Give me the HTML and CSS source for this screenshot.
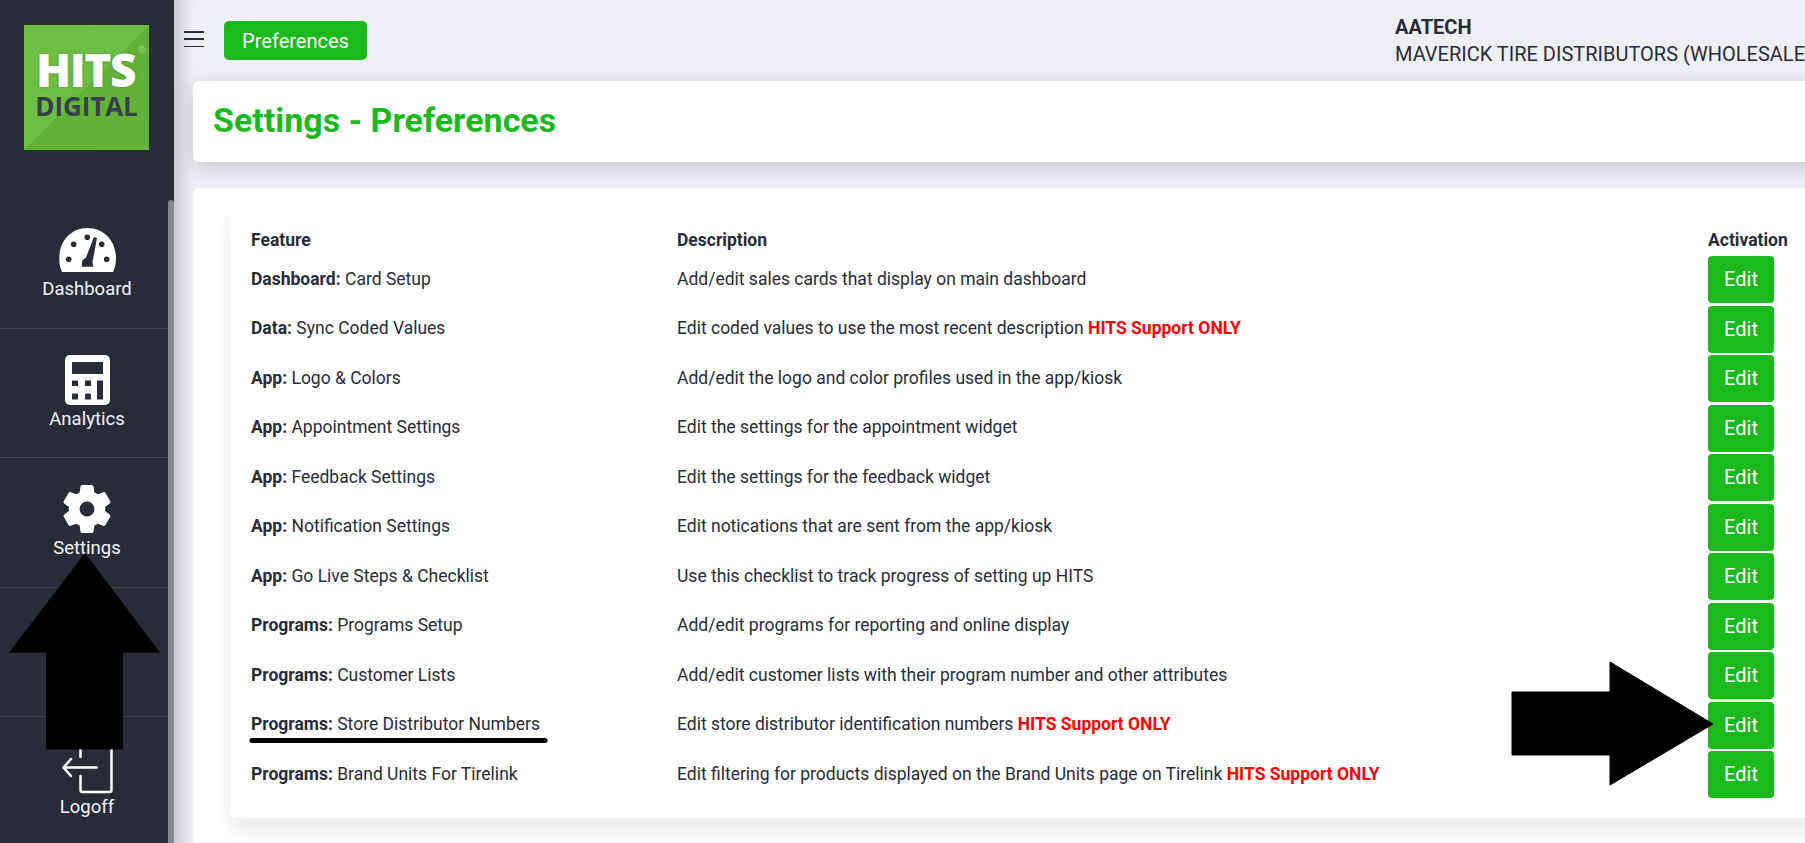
FILE: index.html
```html
<!DOCTYPE html>
<html lang="en">
<head>
<meta charset="utf-8">
<title>Settings - Preferences</title>
<link rel="stylesheet" href="styles.css">
</head>
<body>
<div class="app">
  <aside class="sidebar">
    <div class="logo-wrap">
      <div class="logo">
        <span class="logo-hits">HITS<sup class="logo-reg">®</sup></span>
        <span class="logo-digital">DIGITAL</span>
      </div>
    </div>
    <nav class="nav">
      <a class="nav-item">
        <span class="nav-icon">
          <svg width="58" height="46" viewBox="0 0 58 46"><path fill="#fff" fill-rule="evenodd" d="M4 45C2 41 1.300 36 1.300 31 1.300 14 13 1 29.500 1 46 1 58 14 58 31c0 5-1 10-3 14ZM29.300 7.500a2.800 2.800 0 1 1 0 5.600 2.800 2.800 0 0 1 0-5.600ZM15.700 14.500a2.800 2.800 0 1 1 0 5.600 2.800 2.800 0 0 1 0-5.600ZM43.700 14.500a2.800 2.800 0 1 1 0 5.600 2.800 2.800 0 0 1 0-5.600ZM10.700 29.500a2.800 2.800 0 1 1 0 5.600 2.800 2.800 0 0 1 0-5.600ZM48.700 29.500a2.800 2.800 0 1 1 0 5.600 2.800 2.800 0 0 1 0-5.600ZM36 10l3 1-4.500 24 .8 4.700H23.700l.6-6.200 3.700-3Z"/></svg>
        </span>
        <span class="nav-label">Dashboard</span>
      </a>
      <a class="nav-item">
        <span class="nav-icon">
          <svg width="45" height="50" viewBox="0 0 45 50"><path fill="#fff" fill-rule="evenodd" d="M5 0h35a5 5 0 0 1 5 5v40a5 5 0 0 1-5 5H5a5 5 0 0 1-5-5V5a5 5 0 0 1 5-5ZM7 7v12h31V7ZM7 25.500v5.500h6v-5.500ZM20 25.500v5.500h6v-5.500ZM32 25.500v19h6v-19ZM7 38.500v6h6v-6ZM20 38.500v6h6v-6Z"/></svg>
        </span>
        <span class="nav-label">Analytics</span>
      </a>
      <a class="nav-item">
        <span class="nav-icon">
          <svg width="56" height="56" viewBox="0 0 24 24"><path fill="#fff" stroke="#fff" stroke-width=".6" stroke-linejoin="round" d="M19.430 12.980c.04-.32.07-.64.07-.98s-.03-.66-.07-.98l2.110-1.650c.19-.15.240-.42.120-.64l-2-3.460c-.12-.22-.39-.3-.61-.22l-2.490 1c-.52-.4-1.080-.73-1.690-.98l-.38-2.650C14.460 2.180 14.250 2 14 2h-4c-.25 0-.46.18-.49.42l-.38 2.650c-.61.25-1.170.59-1.690.98l-2.490-1c-.23-.09-.49 0-.61.22l-2 3.460c-.13.22-.07.49.12.640l2.110 1.650c-.04.32-.07.65-.07.98s.03.66.07.98l-2.110 1.650c-.19.15-.240.42-.12.640l2 3.460c.12.22.39.3.61.22l2.490-1c.52.4 1.080.73 1.690.98l.38 2.650c.03.24.24.42.49.42h4c.25 0 .46-.18.49-.42l.38-2.650c.61-.25 1.170-.59 1.690-.98l2.490 1c.23.09.49 0 .61-.22l2-3.460c.12-.22.07-.49-.12-.640l-2.110-1.650ZM12 15.500c-1.930 0-3.500-1.570-3.500-3.500s1.570-3.500 3.500-3.500 3.500 1.570 3.500 3.500-1.570 3.500-3.500 3.500Z"/></svg>
        </span>
        <span class="nav-label">Settings</span>
      </a>
      <a class="nav-item">
        <span class="nav-icon"></span>
      </a>
      <a class="nav-item nav-item-last">
        <span class="nav-icon">
          <svg width="54" height="54" viewBox="0 0 54 54"><path fill="none" stroke="#fff" stroke-width="2.500" stroke-linecap="round" stroke-linejoin="round" d="M20.500 16V3h29a2 2 0 0 1 2 2v44a2 2 0 0 1-2 2h-27a2 2 0 0 1-2-2V35M36.700 26.500H3.500M11 18 3.500 26.500l7.500 8.500"/></svg>
        </span>
        <span class="nav-label">Logoff</span>
      </a>
    </nav>
    <div class="scrollbar"></div>
  </aside>
  <main class="main">
    <header class="topbar">
      <button class="burger" aria-label="Menu"><span></span><span></span><span></span></button>
      <a class="crumb">Preferences</a>
      <div class="account">
        <strong class="account-user">AATECH</strong>
        <span class="account-org">MAVERICK TIRE DISTRIBUTORS (WHOLESALE)</span>
      </div>
    </header>
    <section class="title-card">
      <h1 class="title">Settings - Preferences</h1>
    </section>
    <section class="outer-card">
      <div class="inner-card">
        <div class="row row-head">
          <div>Feature</div><div>Description</div><div>Activation</div>
        </div>
        <div class="row"><div><b>Dashboard:</b> Card Setup</div><div>Add/edit sales cards that display on main dashboard</div><div><a class="edit">Edit</a></div></div>
        <div class="row"><div><b>Data:</b> Sync Coded Values</div><div>Edit coded values to use the most recent description <b class="warn">HITS Support ONLY</b></div><div><a class="edit">Edit</a></div></div>
        <div class="row"><div><b>App:</b> Logo &amp; Colors</div><div>Add/edit the logo and color profiles used in the app/kiosk</div><div><a class="edit">Edit</a></div></div>
        <div class="row"><div><b>App:</b> Appointment Settings</div><div>Edit the settings for the appointment widget</div><div><a class="edit">Edit</a></div></div>
        <div class="row"><div><b>App:</b> Feedback Settings</div><div>Edit the settings for the feedback widget</div><div><a class="edit">Edit</a></div></div>
        <div class="row"><div><b>App:</b> Notification Settings</div><div>Edit notications that are sent from the app/kiosk</div><div><a class="edit">Edit</a></div></div>
        <div class="row"><div><b>App:</b> Go Live Steps &amp; Checklist</div><div>Use this checklist to track progress of setting up HITS</div><div><a class="edit">Edit</a></div></div>
        <div class="row"><div><b>Programs:</b> Programs Setup</div><div>Add/edit programs for reporting and online display</div><div><a class="edit">Edit</a></div></div>
        <div class="row"><div><b>Programs:</b> Customer Lists</div><div>Add/edit customer lists with their program number and other attributes</div><div><a class="edit">Edit</a></div></div>
        <div class="row"><div><b>Programs:</b> Store Distributor Numbers</div><div>Edit store distributor identification numbers <b class="warn">HITS Support ONLY</b></div><div><a class="edit">Edit</a></div></div>
        <div class="row"><div><b>Programs:</b> Brand Units For Tirelink</div><div>Edit filtering for products displayed on the Brand Units page on Tirelink <b class="warn">HITS Support ONLY</b></div><div><a class="edit">Edit</a></div></div>
      </div>
    </section>
  </main>
</div>
<svg class="annotations" width="1805" height="843" viewBox="0 0 1805 843">
  <path d="M85 553 160 652.500H123V749.500H46V652.500H9Z" fill="#000"/>
  <path d="M1512 692H1610V662L1713 724 1610 785V755H1512Z" fill="#000" stroke="#000" stroke-width="1" stroke-linejoin="round"/>
  <line x1="252" y1="740.500" x2="545" y2="740.500" stroke="#000" stroke-width="5" stroke-linecap="round"/>
</svg>
</body>
</html>
```
FILE: styles.css
```css
* { box-sizing: border-box; }
html, body { margin: 0; height: 100%; overflow: hidden; }
body {
  font-family: Roboto, "Liberation Sans", sans-serif;
  font-size: 17.500px;
  color: #282c39;
  background: #eeeff5;
}
.app { display: flex; height: 843px; width: 1805px; overflow: hidden; }

.sidebar {
  position: relative;
  flex: 0 0 174px;
  background: #282c39;
  color: #fff;
  overflow: hidden;
}
.logo-wrap { height: 199px; padding: 25px 0 0 24px; }
.logo {
  width: 125px;
  height: 125px;
  display: flex;
  flex-direction: column;
  align-items: center;
  padding-top: 24px;
  background: linear-gradient(135deg, #70c045 0%, #6cbd43 49.800%, #62b238 50.200%, #64b339 100%);
  font-family: "Open Sans", sans-serif;
  line-height: 1;
}
.logo-hits {
  position: relative;
  margin-left: -2px;
  font-size: 46px;
  font-weight: 800;
  line-height: 40px;
  letter-spacing: -1.500px;
  color: #fff;
  text-shadow: 0 0 3px rgba(60, 110, 30, .5);
}
.logo-reg {
  position: absolute;
  top: -5px;
  right: -9px;
  font-size: 9px;
  line-height: 12px;
  font-weight: 400;
  color: #a7d88f;
  text-shadow: none;
}
.logo-digital {
  margin-top: 2px;
  font-size: 26px;
  font-weight: 700;
  line-height: 30px;
  letter-spacing: -.1px;
  color: #3a3f4d;
}
.nav { display: flex; flex-direction: column; }
.nav-item {
  height: 129.500px;
  padding-top: 24px;
  display: flex;
  flex-direction: column;
  align-items: center;
  border-bottom: 1px solid #41454f;
}
.nav-item-last { border-bottom: 0; }
.nav-icon { height: 54px; display: flex; align-items: center; justify-content: center; }
.nav-label { font-size: 18.500px; line-height: 24px; color: #f2f3f5; }
.scrollbar {
  position: absolute;
  top: 200px;
  right: 0;
  bottom: 0;
  width: 6px;
  background: #85878f;
  border-radius: 3px 3px 0 0;
}

.main {
  flex: 1 1 0;
  min-width: 0;
  padding: 0 0 0 19px;
  overflow: hidden;
  box-shadow: inset 18px 0 14px -10px rgba(40, 44, 57, .2);
}
.topbar { height: 81px; display: flex; align-items: flex-start; white-space: nowrap; }
.burger {
  flex: none;
  width: 20px;
  height: 16px;
  margin: 31px 0 0 -9px;
  padding: 0;
  border: 0;
  background: none;
  display: flex;
  flex-direction: column;
  justify-content: space-between;
}
.burger span { display: block; height: 1.500px; background: #282c39; }
.crumb {
  flex: none;
  margin: 21px 0 0 20px;
  width: 143px;
  height: 39px;
  border-radius: 5px;
  background: #1aba1c;
  color: #fff;
  font-size: 20px;
  line-height: 40px;
  text-align: center;
}
.account {
  flex: none;
  margin: 14px 0 0 1028px;
  display: flex;
  flex-direction: column;
  font-size: 20px;
  line-height: 27px;
}
.account-user { font-weight: 700; }

.title-card {
  width: 1700px;
  height: 81px;
  padding: 0 0 4px 20px;
  display: flex;
  align-items: center;
  background: #fff;
  border-radius: 5px;
  box-shadow: 0 6px 20px rgba(40, 44, 57, .2);
}
.title { margin: 0; font-size: 34px; font-weight: 700; color: #1aba1c; }

.outer-card {
  width: 1700px;
  height: 700px;
  margin-top: 26px;
  padding: 18px 0 0 37px;
  background: #fff;
  border-radius: 5px;
}
.inner-card {
  width: 1640px;
  height: 612px;
  padding-left: 21px;
  background: #fff;
  border-radius: 4px;
  box-shadow: 0 14px 24px rgba(0, 0, 0, .09);
}
.row {
  display: grid;
  grid-template-columns: 426px 1031px 90px;
  align-items: center;
  height: 49.500px;
  line-height: 20px;
}
.row > div:nth-child(-n+2) { margin-bottom: 2px; }
.row-head { height: 49px; padding-top: 21px; font-weight: 700; }
.row-head > div:last-child { margin-bottom: 2px; }
.warn { color: #f00; }
.edit {
  display: block;
  width: 66px;
  height: 47px;
  border-radius: 4px;
  background: #1aba1c;
  color: #fff;
  font-size: 20px;
  line-height: 47px;
  text-align: center;
}
.annotations { position: absolute; top: 0; left: 0; pointer-events: none; }
```
